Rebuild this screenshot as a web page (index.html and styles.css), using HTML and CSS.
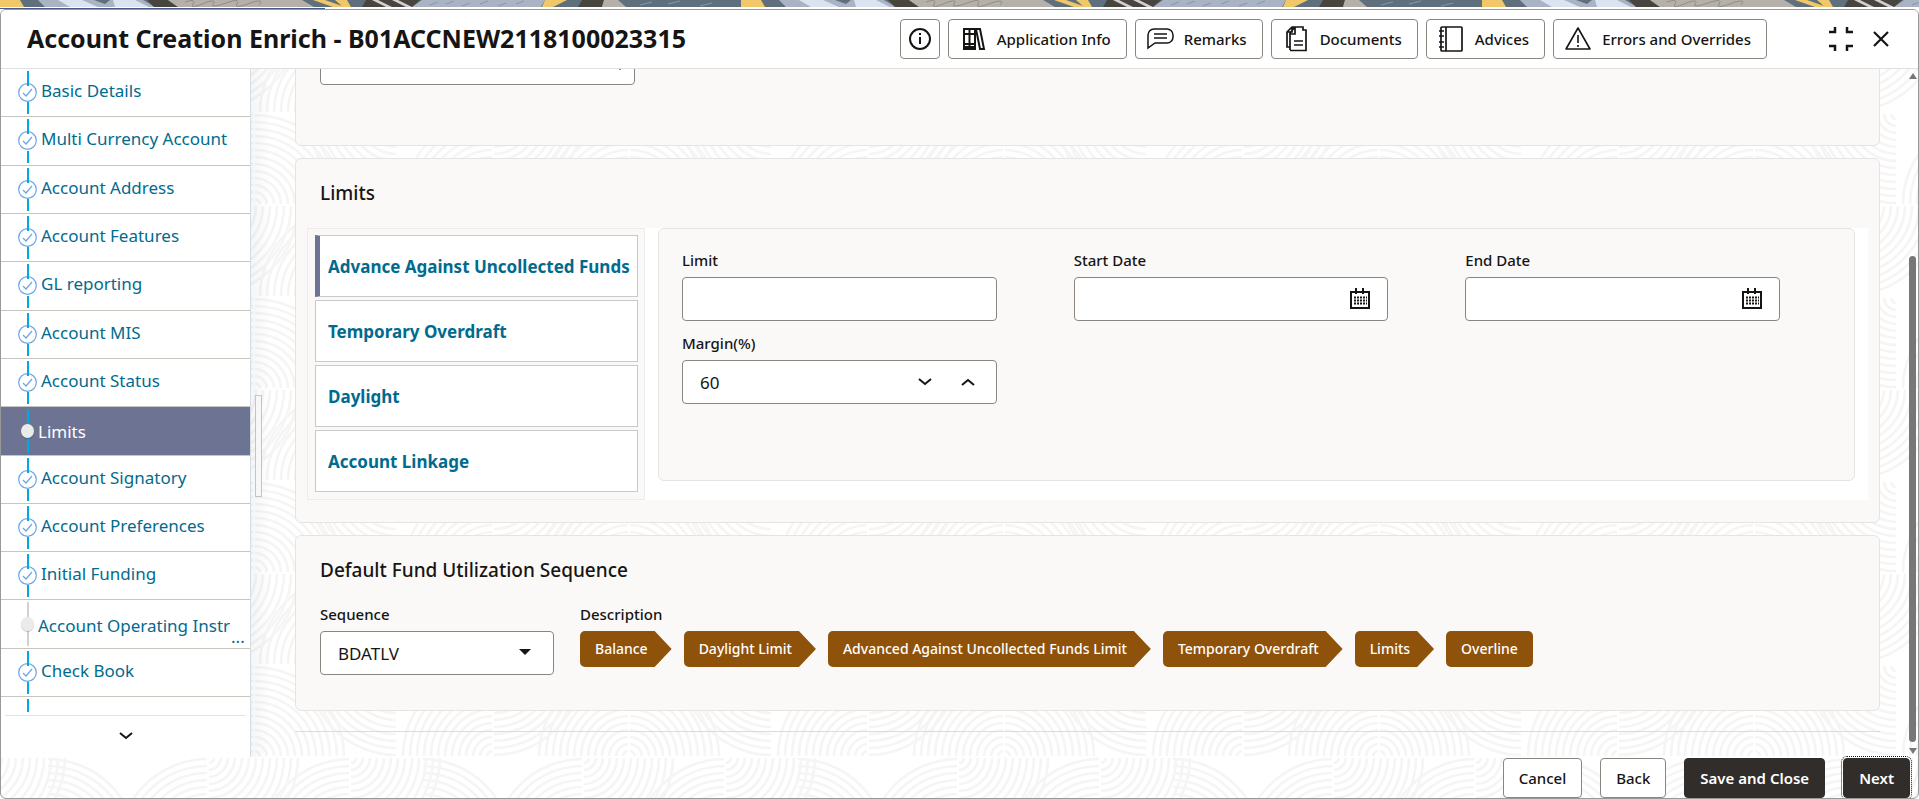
FILE: index.html
```html
<!DOCTYPE html>
<html lang="en">
<head>
  <meta charset="UTF-8">
  <meta name="viewport" content="width=device-width, initial-scale=1.0">
  <title>Account Creation Enrich</title>
  <link rel="stylesheet" href="styles.css">
</head>
<body>
  <div class="banner"></div>
  <div class="workspace">
    <!-- Header -->
    <header class="header">
      <h1>Account Creation Enrich - B01ACCNEW2118100023315</h1>
      <div class="header-actions">
        <button type="button" class="btn btn-info" aria-label="Information">
          <svg width="24" height="24" viewBox="0 0 24 24" fill="none" stroke="#161513" stroke-width="2"><circle cx="12" cy="12" r="10"/><path d="M12 10v7M12 6v2" stroke-width="2"/></svg>
        </button>
        <button type="button" class="btn btn-tool">
          <svg width="28" height="28" viewBox="0 0 28 28" fill="none" stroke="#161513" stroke-width="2"><path d="M5 4h11v20H5zM10.500 4v20M5 9h11M5 19h11M5 22h11M17 4h4l4 20h-4z"/></svg>
          Application Info
        </button>
        <button type="button" class="btn btn-tool">
          <svg width="28" height="28" viewBox="0 0 28 28" fill="none" stroke="#161513" stroke-width="1.5"><path d="M2 23V10a6 6 0 0 1 6-6h13a6 6 0 0 1 6 6v2a6 6 0 0 1-6 6H9zM8 9h13M8 13h13"/></svg>
          Remarks
        </button>
        <button type="button" class="btn btn-tool">
          <svg width="28" height="28" viewBox="0 0 28 28" fill="none" stroke="#161513" stroke-width="1.7"><path d="M8 25V8l5-6h8v3h3v20.500H8M8 22H5V7l5-5h3v7H8M5 7h5V2M12 16h9M12 20h9"/></svg>
          Documents
        </button>
        <button type="button" class="btn btn-tool">
          <svg width="28" height="28" viewBox="0 0 28 28" fill="none" stroke="#161513" stroke-width="1.7"><rect x="4" y="2" width="21" height="24" rx="1"/><path d="M9 2v24M2 6h5M2 11h5M2 17h5M2 22h5"/></svg>
          Advices
        </button>
        <button type="button" class="btn btn-tool">
          <svg width="28" height="28" viewBox="0 0 28 28" fill="none" stroke="#161513" stroke-width="1.6" stroke-linejoin="round"><path d="M14 3l12 21H2zM14 10v8M14 20v2"/></svg>
          Errors and Overrides
        </button>
      </div>
      <div class="window-actions">
        <button type="button" class="btn-plain" aria-label="Exit full screen">
          <svg width="26" height="26" viewBox="0 0 26 26" fill="none" stroke="#161513" stroke-width="2.500"><path d="M7 1v5H1M19 1v5h6M1 20h6v5M25 20h-6v5"/></svg>
        </button>
        <button type="button" class="btn-plain" aria-label="Close">
          <svg width="16" height="16" viewBox="0 0 16 16" fill="none" stroke="#161513" stroke-width="2.200"><path d="M1 1l14 14M15 1L1 15"/></svg>
        </button>
      </div>
    </header>

    <div class="main">
      <!-- Steps -->
      <nav class="sidebar" aria-label="Steps">
        <ul class="steps">
          <li class="step done"><span class="marker"><svg class="tick" viewBox="0 0 19 19"><circle cx="9.500" cy="9.500" r="8.800"/><path d="M5 10l3 3 6-7"/></svg></span><a href="#">Basic Details</a></li>
          <li class="step done"><span class="marker"><svg class="tick" viewBox="0 0 19 19"><circle cx="9.500" cy="9.500" r="8.800"/><path d="M5 10l3 3 6-7"/></svg></span><a href="#">Multi Currency Account</a></li>
          <li class="step done"><span class="marker"><svg class="tick" viewBox="0 0 19 19"><circle cx="9.500" cy="9.500" r="8.800"/><path d="M5 10l3 3 6-7"/></svg></span><a href="#">Account Address</a></li>
          <li class="step done"><span class="marker"><svg class="tick" viewBox="0 0 19 19"><circle cx="9.500" cy="9.500" r="8.800"/><path d="M5 10l3 3 6-7"/></svg></span><a href="#">Account Features</a></li>
          <li class="step done"><span class="marker"><svg class="tick" viewBox="0 0 19 19"><circle cx="9.500" cy="9.500" r="8.800"/><path d="M5 10l3 3 6-7"/></svg></span><a href="#">GL reporting</a></li>
          <li class="step done"><span class="marker"><svg class="tick" viewBox="0 0 19 19"><circle cx="9.500" cy="9.500" r="8.800"/><path d="M5 10l3 3 6-7"/></svg></span><a href="#">Account MIS</a></li>
          <li class="step done"><span class="marker"><svg class="tick" viewBox="0 0 19 19"><circle cx="9.500" cy="9.500" r="8.800"/><path d="M5 10l3 3 6-7"/></svg></span><a href="#">Account Status</a></li>
          <li class="step active"><span class="marker"><span class="dot"></span></span><a href="#" aria-current="step">Limits</a></li>
          <li class="step done"><span class="marker"><svg class="tick" viewBox="0 0 19 19"><circle cx="9.500" cy="9.500" r="8.800"/><path d="M5 10l3 3 6-7"/></svg></span><a href="#">Account Signatory</a></li>
          <li class="step done"><span class="marker"><svg class="tick" viewBox="0 0 19 19"><circle cx="9.500" cy="9.500" r="8.800"/><path d="M5 10l3 3 6-7"/></svg></span><a href="#">Account Preferences</a></li>
          <li class="step done"><span class="marker"><svg class="tick" viewBox="0 0 19 19"><circle cx="9.500" cy="9.500" r="8.800"/><path d="M5 10l3 3 6-7"/></svg></span><a href="#">Initial Funding</a></li>
          <li class="step pending"><span class="marker"><span class="dot"></span></span><a href="#">Account Operating Instr</a><span class="more">...</span></li>
          <li class="step done"><span class="marker"><svg class="tick" viewBox="0 0 19 19"><circle cx="9.500" cy="9.500" r="8.800"/><path d="M5 10l3 3 6-7"/></svg></span><a href="#">Check Book</a></li>
        </ul>
        <div class="steps-tail"></div>
        <button type="button" class="steps-next" aria-label="More steps">
          <svg width="14" height="8" viewBox="0 0 14 8" fill="none" stroke="#161513" stroke-width="2"><path d="M1 1l6 5 6-5"/></svg>
        </button>
      </nav>

      <div class="gutter">
        <button type="button" class="splitter" aria-label="Resize steps"></button>
      </div>

      <!-- Form -->
      <main class="content">
        <section class="panel panel-previous">
          <div class="select-wrap">
            <select class="control" aria-label="Previous section"><option></option></select>
            <svg class="caret" width="12" height="6" viewBox="0 0 12 6"><path d="M0 0h12L6 6z" fill="#161513"/></svg>
          </div>
        </section>

        <section class="panel">
          <h2>Limits</h2>
          <div class="limits">
            <div class="tabs">
              <button type="button" class="tab selected">Advance Against Uncollected Funds</button>
              <button type="button" class="tab">Temporary Overdraft</button>
              <button type="button" class="tab">Daylight</button>
              <button type="button" class="tab">Account Linkage</button>
            </div>
            <div class="fields">
              <div class="field">
                <label for="limit">Limit</label>
                <input class="control" type="text" id="limit">
              </div>
              <div class="field">
                <label for="startDate">Start Date</label>
                <div class="control control-group">
                  <input type="text" id="startDate">
                  <button type="button" class="btn-plain" aria-label="Pick start date">
                    <svg width="22" height="22" viewBox="0 0 22 22" fill="none" stroke="#161513"><path d="M2 4h18v16H2z" stroke-width="2"/><path d="M7 0v6M14 0v6" stroke-width="2"/><path d="M5 9.500h13M5 12.500h13M5 15.500h13" stroke-width="2" stroke-dasharray="2 1"/></svg>
                  </button>
                </div>
              </div>
              <div class="field">
                <label for="endDate">End Date</label>
                <div class="control control-group">
                  <input type="text" id="endDate">
                  <button type="button" class="btn-plain" aria-label="Pick end date">
                    <svg width="22" height="22" viewBox="0 0 22 22" fill="none" stroke="#161513"><path d="M2 4h18v16H2z" stroke-width="2"/><path d="M7 0v6M14 0v6" stroke-width="2"/><path d="M5 9.500h13M5 12.500h13M5 15.500h13" stroke-width="2" stroke-dasharray="2 1"/></svg>
                  </button>
                </div>
              </div>
              <div class="field">
                <label for="margin">Margin(%)</label>
                <div class="control control-group stepper">
                  <input type="text" id="margin" value="60">
                  <button type="button" class="btn-plain" aria-label="Decrease">
                    <svg width="14" height="8" viewBox="0 0 14 8" fill="none" stroke="#161513" stroke-width="2"><path d="M1 1l6 5 6-5"/></svg>
                  </button>
                  <button type="button" class="btn-plain" aria-label="Increase">
                    <svg width="14" height="8" viewBox="0 0 14 8" fill="none" stroke="#161513" stroke-width="2"><path d="M1 7l6-5 6 5"/></svg>
                  </button>
                </div>
              </div>
            </div>
          </div>
        </section>

        <section class="panel">
          <h2>Default Fund Utilization Sequence</h2>
          <div class="sequence">
            <div class="field sequence-field">
              <label for="sequence">Sequence</label>
              <div class="select-wrap">
                <select class="control" id="sequence"><option>BDATLV</option></select>
                <svg class="caret" width="12" height="6" viewBox="0 0 12 6"><path d="M0 0h12L6 6z" fill="#161513"/></svg>
              </div>
            </div>
            <div class="description">
              <span class="label">Description</span>
              <ol class="chips">
                <li class="chip">Balance</li>
                <li class="chip">Daylight Limit</li>
                <li class="chip">Advanced Against Uncollected Funds Limit</li>
                <li class="chip">Temporary Overdraft</li>
                <li class="chip">Limits</li>
                <li class="chip chip-last">Overline</li>
              </ol>
            </div>
          </div>
        </section>
        <hr>
      </main>

      <div class="scrollbar" aria-hidden="true">
        <svg width="8" height="6" viewBox="0 0 8 6"><path d="M4 0l4 6H0z" fill="#777"/></svg>
        <div class="track"><div class="thumb"></div></div>
        <svg width="8" height="6" viewBox="0 0 8 6"><path d="M4 6l4-6H0z" fill="#777"/></svg>
      </div>
    </div>

    <!-- Footer -->
    <footer class="footer">
      <button type="button" class="btn">Cancel</button>
      <button type="button" class="btn">Back</button>
      <button type="button" class="btn btn-dark">Save and Close</button>
      <button type="button" class="btn btn-dark btn-next">Next</button>
    </footer>
  </div>
</body>
</html>
```
FILE: styles.css
```css
* {
  box-sizing: border-box;
}

body, h1, h2, ul, ol {
  margin: 0;
  padding: 0;
}

body {
  display: flex;
  flex-direction: column;
  height: 100vh;
  overflow: hidden;
  background: #fff;
  color: #161513;
  font-family: 'Noto Sans', 'Open Sans', sans-serif;
  font-size: 15px;
}

button, input, select {
  font: inherit;
  color: inherit;
}

button {
  cursor: pointer;
}

/* Decorative strip */
.banner {
  flex: none;
  height: 9px;
  background:
    linear-gradient(#4a5a86, #4a5a86) 0 8px / 325px 1px no-repeat,
    linear-gradient(#fff, #fff) 0 7px / 100% 2px no-repeat,
    url("data:image/svg+xml,%3Csvg xmlns='http://www.w3.org/2000/svg' width='741' height='7'%3E%3Cpath fill='%235f6f7c' d='M0 0h741v7H0z'/%3E%3Cpath fill='%23f0c869' d='M0 0h20l4 7H0zM313 0h12l20 7h-12zM335 0h12l4 7h-8zM545 0h22l-14 7h-11z'/%3E%3Cpath fill='%23a9b3c4' d='M38 0h105l12 7H45zM422 0h123l-4 7H412z'/%3E%3Cpath fill='%23dbe3f1' d='M58 0h24l16 7H70zM113 0h22l14 7h-34z'/%3E%3Cpath fill='%235f6f7c' d='M94 0h16l-5 4z'/%3E%3Cpath fill='%2348453f' d='M147 0h21l10 7h-24zM366 0h54l-8 7h-50zM582 0h22l-2 7h-24z'/%3E%3Cpath fill='%23b5b0aa' d='M168 0h134l12 7H178zM604 0h14l8 7h-24z'/%3E%3Cpath fill='%23d0d0d0' d='M372 0h6l14 7h-6zM392 0h6l14 7h-6z'/%3E%3Cpath fill='none' stroke='%23918c87' d='M185 2q12-4 8 2t14-2q10-3 6 2t16-2q12-4 8 2t16-2q12-3 6 3'/%3E%3Cpath fill='none' stroke='%238795ac' d='M430 5l8-3M446 4l8-3M462 6l8-3M480 4l8-3M498 6l8-3M516 4l8-3M640 5l12-3M668 4l12-3M700 6l12-3'/%3E%3C/svg%3E") 0 0 repeat-x;
}

.workspace {
  flex: 1;
  min-height: 0;
  display: flex;
  flex-direction: column;
  border: 1px solid #999;
  border-radius: 6px;
  overflow: hidden;
  background: #fff url("data:image/svg+xml,%3Csvg xmlns='http://www.w3.org/2000/svg' xmlns:xlink='http://www.w3.org/1999/xlink' width='375' height='184'%3E%3Cdefs%3E%3Cpath id='q' fill='none' stroke='%23f5f5f5' stroke-width='2.700' d='M6 1A6 6 0 0 1 1 6M13 1A13 13 0 0 1 1 13M20 1A20 20 0 0 1 1 20M27 1A27 27 0 0 1 1 27M34 1A34 34 0 0 1 1 34M41 1A41 41 0 0 1 1 41M48 1A48 48 0 0 1 1 48M55 1A55 55 0 0 1 1 55M62 1A62 62 0 0 1 1 62M69 1A69 69 0 0 1 1 69M76 1A76 76 0 0 1 1 76M83 1A83 83 0 0 1 1 83M90 1A90 90 0 0 1 1 90'/%3E%3C/defs%3E%3Cuse xlink:href='%23q' transform='translate(0 184) scale(1 -1)'/%3E%3Cuse xlink:href='%23q' transform='translate(375 184) scale(-1 -1)'/%3E%3Cuse xlink:href='%23q' transform='translate(143 92) scale(-1 1)'/%3E%3Cuse xlink:href='%23q' transform='translate(239 184) scale(-1 -1)'/%3E%3Cuse xlink:href='%23q' transform='translate(239 92)'/%3E%3Cuse xlink:href='%23q' transform='translate(-46 0)'/%3E%3Cuse xlink:href='%23q' transform='translate(329 0)'/%3E%3Cuse xlink:href='%23q' transform='translate(96 0)'/%3E%3Cuse xlink:href='%23q' transform='translate(96 92) scale(-1 -1)'/%3E%3Cuse xlink:href='%23q' transform='translate(168 92) scale(1 -1)'/%3E%3Cuse xlink:href='%23q' transform='translate(329 92) scale(-1 -1)'/%3E%3C/svg%3E") 253px 563px;
}

/* Header */
.header {
  flex: none;
  display: flex;
  align-items: center;
  height: 59px;
  padding: 0 29px 0 26px;
  background: #fff;
  border-bottom: 1px solid #e0e0e0;
}

.header h1 {
  flex: 1;
  padding-bottom: 2px;
  font-size: 25px;
  font-weight: 700;
  line-height: 32px;
  white-space: nowrap;
}

.header-actions {
  display: flex;
  gap: 8px;
}

.btn {
  height: 40px;
  padding: 0 15px;
  border: 1px solid #8b8580;
  border-radius: 4px;
  background: #fff;
  font-weight: 500;
  white-space: nowrap;
}

.btn-info {
  display: flex;
  align-items: center;
  justify-content: center;
  width: 40px;
  padding: 0;
}

.btn-tool {
  display: flex;
  align-items: center;
  gap: 10px;
  padding: 0 15px 0 10px;
}

.btn-plain {
  display: flex;
  padding: 0;
  border: 0;
  background: none;
}

.window-actions {
  display: flex;
  align-items: center;
  gap: 19px;
  margin-left: 61px;
}

.main {
  flex: 1;
  min-height: 0;
  display: flex;
}

/* Steps */
.sidebar {
  flex: none;
  display: flex;
  flex-direction: column;
  width: 250px;
  background: #fff;
  border-right: 1px solid #d3dde6;
}

.steps {
  flex: 1;
  display: flex;
  flex-direction: column;
  list-style: none;
}

.step {
  flex: 1;
  position: relative;
  display: flex;
  align-items: center;
  gap: 4px;
  padding-left: 17px;
  border-bottom: 1px solid #c8c4be;
  font-size: 17px;
}

.step a {
  padding-bottom: 4px;
  color: #006b8f;
  text-decoration: none;
  white-space: nowrap;
}

.marker {
  flex: none;
  display: flex;
  justify-content: center;
  width: 19px;
}

.marker::before,
.marker::after,
.steps-tail::before {
  content: "";
  position: absolute;
  left: 26px;
  width: 2px;
  background: #00a9e0;
}

.marker::before {
  top: 2px;
  height: 15px;
}

.marker::after {
  bottom: 2px;
  height: 12px;
}

.tick {
  width: 19px;
  height: 19px;
  fill: none;
  stroke: #6ba5e7;
  stroke-width: 1.2;
}

.dot {
  z-index: 1;
  width: 13px;
  height: 14px;
  border-radius: 50%;
  background: #ebebeb;
  box-shadow: 0 1px 1px rgba(0, 0, 0, 0.2);
}

.step.active,
.step.pending {
  gap: 1px;
}

.step.active a,
.step.pending a {
  padding: 2px 0 0;
}

.active {
  background: #6c7393;
}

.step.active a {
  color: #fff;
}

.active .marker::before,
.active .marker::after,
.pending .marker::before,
.pending .marker::after {
  height: 20px;
}

.pending .marker::before,
.pending .marker::after {
  background: #d2d2d2;
}

.more {
  align-self: flex-end;
  color: #006b8f;
}

.steps-tail {
  position: relative;
  height: 18px;
}

.steps-tail::before {
  top: 2px;
  height: 13px;
}

.steps-next {
  display: flex;
  align-items: center;
  justify-content: center;
  height: 42px;
  margin: 0 4px;
  padding: 0 0 2px;
  border: 0;
  border-top: 1px solid #e2e2e2;
  background: #fff;
}

.gutter {
  flex: none;
  width: 44px;
  padding: 326px 0 0 4px;
  background: linear-gradient(to right, rgba(0, 0, 0, 0.04), rgba(0, 0, 0, 0) 20px);
}

.splitter {
  display: block;
  width: 7px;
  height: 102px;
  padding: 0;
  border: 1px solid #c4c4c4;
  background: #f7f7f7;
}

/* Form panels */
.content {
  flex: 1;
  min-width: 0;
  display: flex;
  flex-direction: column;
  justify-content: flex-end;
  gap: 12px;
  overflow: hidden;
}

.panel {
  flex: none;
  padding: 18px 24px 35px;
  background: #faf9f8;
  border: 1px solid #e6e4e1;
  border-radius: 6px;
}

.panel-previous {
  padding-bottom: 60px;
}

.panel-previous .select-wrap {
  width: 315px;
}

.panel-previous .caret {
  top: 23px;
  right: 9px;
}

.panel h2 {
  font-size: 19px;
  font-weight: 500;
  line-height: 32px;
}

.limits {
  display: flex;
  gap: 13px;
  margin: 19px -13px -13px;
  background: #fff;
}

.tabs {
  flex: none;
  display: flex;
  flex-direction: column;
  gap: 3px;
  width: 338px;
  padding: 6px 6px 7px 7px;
  background: #faf9f8;
  border: 1px solid #eeecea;
}

.tab {
  height: 62px;
  padding: 0 12px;
  border: 1px solid #c9c9c9;
  background: #fff;
  color: #006b8f;
  font-size: 17px;
  font-weight: 700;
  text-align: left;
  white-space: nowrap;
}

.tab.selected {
  padding-left: 8px;
  border-left: 5px solid #6c7393;
}

.fields {
  flex: 1;
  display: grid;
  grid-template-columns: repeat(3, minmax(0, 1fr));
  align-content: start;
  gap: 12px 77px;
  margin: 0 13px 19px 0;
  padding: 21px 74px 0 23px;
  background: #faf9f8;
  border: 1px solid #e6e4e1;
  border-radius: 6px;
}

.field {
  display: flex;
  flex-direction: column;
}

label,
.label {
  margin-bottom: 7px;
  font-weight: 500;
  line-height: 20px;
}

.control {
  width: 100%;
  height: 44px;
  padding: 0 17px;
  border: 1px solid #8b8580;
  border-radius: 4px;
  background: #fff;
  font-size: 17px;
}

.control-group {
  display: flex;
  align-items: center;
  padding-right: 16px;
}

.control-group input {
  flex: 1;
  min-width: 0;
  padding: 0;
  border: 0;
  outline: 0;
  background: none;
}

.stepper {
  gap: 29px;
  padding-right: 21px;
}

select.control {
  display: block;
  appearance: none;
}

.select-wrap {
  position: relative;
}

.caret {
  position: absolute;
  top: 18px;
  right: 23px;
  pointer-events: none;
}

/* Fund utilization sequence */
.sequence {
  display: flex;
  gap: 26px;
  margin-top: 18px;
}

.sequence-field {
  width: 234px;
}

.description {
  display: flex;
  flex-direction: column;
}

.chips {
  display: flex;
  gap: 12px;
  list-style: none;
}

.chip {
  height: 36px;
  padding: 0 24px 0 15px;
  border-radius: 5px;
  background: #8f520a;
  color: #fff;
  font-size: 14px;
  font-weight: 500;
  line-height: 35px;
  white-space: nowrap;
  clip-path: polygon(0 0, calc(100% - 17px) 0, 100% 50%, calc(100% - 17px) 100%, 0 100%);
}

.chip-last {
  padding-right: 15px;
  clip-path: none;
}

hr {
  flex: none;
  width: 100%;
  height: 1px;
  margin: 8px 0 25px;
  border: 0;
  background: #dcdcdc;
}

.scrollbar {
  flex: none;
  display: flex;
  flex-direction: column;
  align-items: center;
  width: 38px;
  padding: 4px 0 3px 27px;
}

.track {
  flex: 1;
  display: flex;
  align-items: flex-end;
  padding: 6px 0;
}

.thumb {
  width: 7px;
  height: 74%;
  border-radius: 4px;
  background: #777;
}

/* Footer */
.footer {
  flex: none;
  display: flex;
  justify-content: flex-end;
  gap: 18px;
  height: 41px;
  padding: 1px 8px 0 0;
}

.btn-dark {
  border-color: #312d2a;
  background: #312d2a;
  color: #fff;
  font-weight: 600;
}

.btn-next {
  outline: 1px dotted #161513;
  outline-offset: 1px;
}
```
